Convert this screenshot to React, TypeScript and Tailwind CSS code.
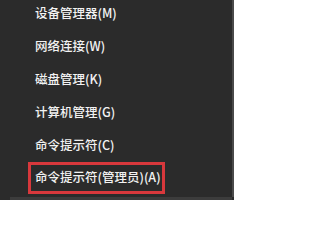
const items = [
  '设备管理器(M)',
  '网络连接(W)',
  '磁盘管理(K)',
  '计算机管理(G)',
  '命令提示符(C)',
  '命令提示符(管理员)(A)',
]

export default function App() {
  return (
    <div
      className="w-[234px] h-[200px] overflow-hidden bg-[#2b2b2b] flex flex-col"
      style={{ fontFamily: '"Microsoft YaHei", "Noto Sans CJK SC", "Liberation Sans", sans-serif' }}
    >
      <div className="flex-1 flex">
        <div className="flex-1 flex flex-col -mt-[3px] pl-[28px]">
          {items.map((label, i) => {
            const highlighted = i === items.length - 1
            return (
              <div key={label} className="h-[33px] flex items-center">
                <div
                  className={
                    highlighted
                      ? 'h-[32px] w-[137px] -mt-[2px] border-[3px] border-[#d8383c] flex items-center pl-[4px]'
                      : 'h-[32px] flex items-center pl-[7px]'
                  }
                >
                  <span className="text-[12.5px] leading-none font-medium text-[#f2f2f2] whitespace-nowrap">
                    {label}
                  </span>
                </div>
              </div>
            )
          })}
        </div>
        <div className="w-[2px] bg-[#4a4a4a]" />
      </div>
      <div className="h-[3px] ml-[10px] mr-[2px] bg-[#3c3c3c]" />
    </div>
  )
}
